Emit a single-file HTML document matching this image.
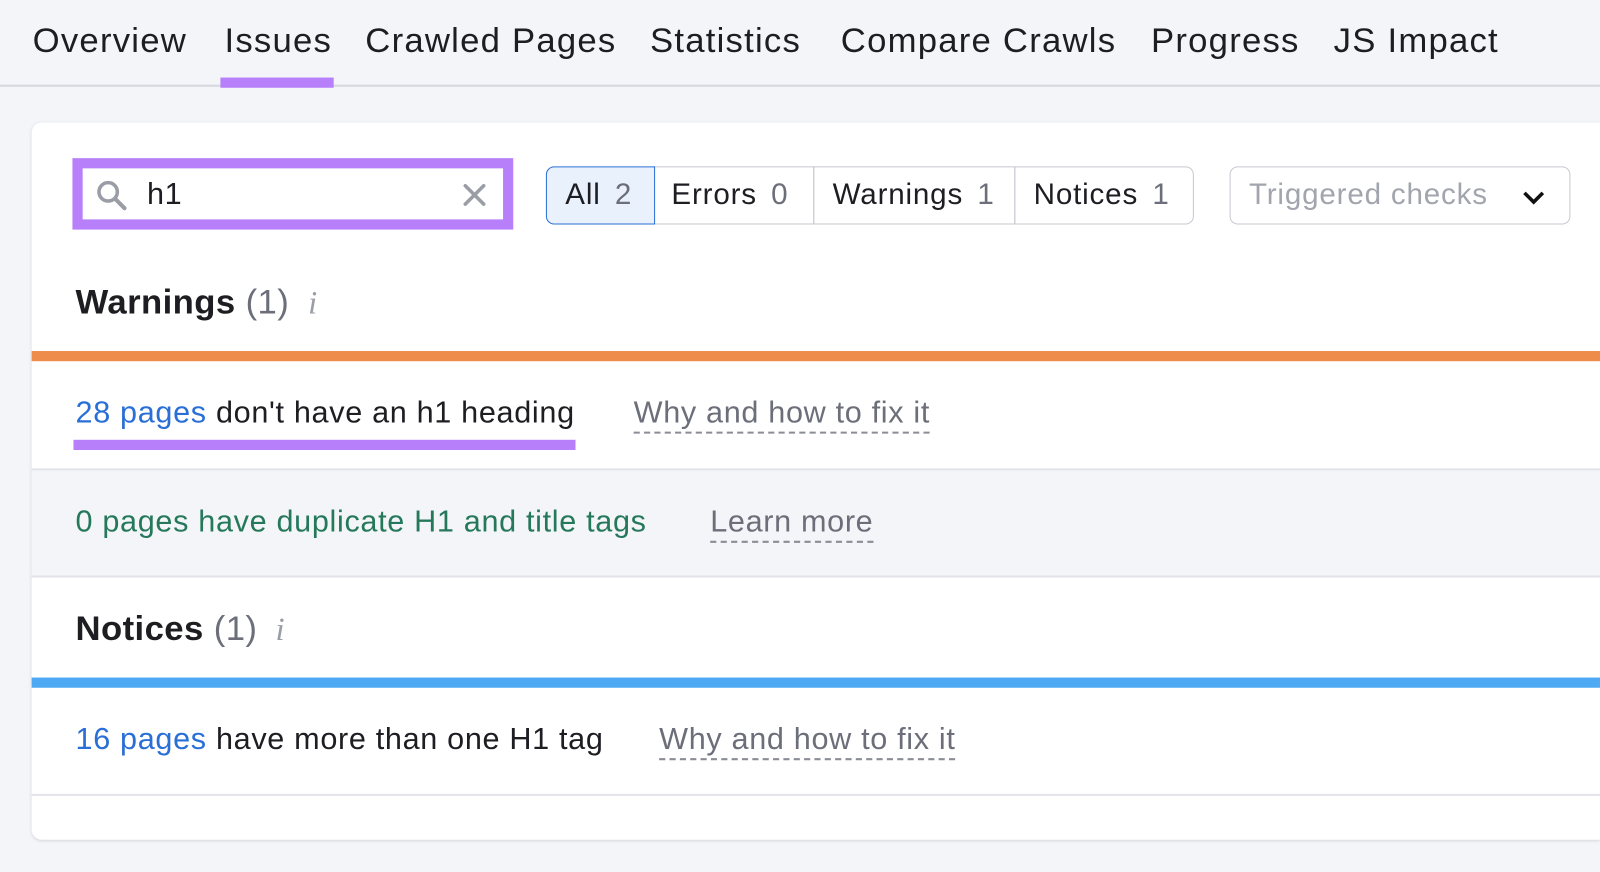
<!DOCTYPE html>
<html><head><meta charset="utf-8"><style>
*{margin:0;padding:0;box-sizing:border-box}
body{width:1600px;height:872px;background:#f4f5f9;font-family:"Liberation Sans",Arial,sans-serif;overflow:hidden;color:#1d1d22}
#w{position:absolute;left:0;top:0;width:1568px;height:855px;transform:scale(1.0204);transform-origin:0 0}
.a{position:absolute;white-space:nowrap}
.tab{top:20px;font-size:34px;line-height:40px;color:#1d1d22;letter-spacing:1.2px}
.card{position:absolute;left:31px;top:120px;width:1537px;height:703px;background:#fff;border-radius:10px 0 0 10px;box-shadow:0 1px 3px rgba(0,0,0,.12)}
.t30{font-size:30px;line-height:36px;letter-spacing:0.65px}
.dash{color:#6c6e79;border-bottom:2px dashed #8a8c96;padding-bottom:2px}
.seg{position:absolute;top:163px;height:57px;border:1.5px solid #c7c9d1;font-size:29px;line-height:54px;padding-left:18px;letter-spacing:0.8px}
.n{color:#6c6e79;margin-left:14px}
.h{font-size:34px;line-height:40px;font-weight:bold;letter-spacing:0.4px}
</style></head><body><div id="w">
<div class="a tab" style="left:32px">Overview</div>
<div class="a tab" style="left:220px">Issues</div>
<div class="a tab" style="left:358px">Crawled Pages</div>
<div class="a tab" style="left:637px">Statistics</div>
<div class="a tab" style="left:824px">Compare Crawls</div>
<div class="a tab" style="left:1128px">Progress</div>
<div class="a tab" style="left:1307px">JS Impact</div>
<div class="a" style="left:0;top:83px;width:1600px;height:2px;background:#d6d8de"></div>
<div class="a" style="left:216px;top:76px;width:111px;height:10px;background:#b77ffa"></div>

<div class="card"></div>
<div class="a" style="left:71px;top:155px;width:432px;height:70px;background:#b77ffa"></div>
<div class="a" style="left:81px;top:165px;width:412px;height:50px;background:#fff"></div>
<svg class="a" style="left:93px;top:175px" width="34" height="34" viewBox="0 0 34 34"><circle cx="13" cy="13" r="9" fill="none" stroke="#9a9ca6" stroke-width="3.5"/><path d="M20 20l9 9" stroke="#9a9ca6" stroke-width="4" stroke-linecap="round"/></svg>
<div class="a t30" style="left:144px;top:173px;color:#1d1d22">h1</div>
<svg class="a" style="left:453px;top:179px" width="24" height="24"><path d="M3 3l18 18M21 3L3 21" stroke="#9a9ca6" stroke-width="3.5" stroke-linecap="round"/></svg>
<div class="seg" style="left:535px;width:107px;border-radius:8px 0 0 8px;background:#e9f1fd;border-color:#2a6fd6;z-index:2">All<span class="n">2</span></div>
<div class="seg" style="left:640px;width:158px;border-left:none">Errors<span class="n">0</span></div>
<div class="seg" style="left:797px;width:198px;">Warnings<span class="n">1</span></div>
<div class="seg" style="left:994px;width:176px;border-radius:0 8px 8px 0">Notices<span class="n">1</span></div>
<div class="seg" style="left:1205px;width:334px;border-radius:8px;color:#a3a5ae">Triggered checks</div>
<svg class="a" style="left:1491px;top:185px" width="24" height="16"><path d="M3 4l9 9 9-9" fill="none" stroke="#111" stroke-width="3.5"/></svg>

<div class="a h" style="left:74px;top:276px">Warnings <span style="font-weight:normal;color:#6c6e79">(1)</span></div>
<div class="a" style="left:302px;top:278px;font-size:32px;font-style:italic;font-family:'Liberation Serif',serif;color:#9a9ca6">i</div>
<div class="a" style="left:31px;top:344px;width:1537px;height:10px;background:#ee8c4c"></div>
<div class="a t30" style="left:74px;top:387px"><span style="color:#2a6fd6">28 pages</span> don't have an h1 heading</div>
<div class="a" style="left:72px;top:431px;width:492px;height:10px;background:#b77ffa"></div>
<div class="a t30" style="left:621px;top:387px"><span class="dash">Why and how to fix it</span></div>
<div class="a" style="left:31px;top:459px;width:1537px;height:107px;background:#f4f5f9;border-top:2px solid #e2e4ea;border-bottom:2px solid #e2e4ea"></div>
<div class="a t30" style="left:74px;top:494px;color:#25795a">0 pages have duplicate H1 and title tags</div>
<div class="a t30" style="left:696px;top:494px"><span class="dash">Learn more</span></div>

<div class="a h" style="left:74px;top:596px">Notices <span style="font-weight:normal;color:#6c6e79">(1)</span></div>
<div class="a" style="left:270px;top:598px;font-size:32px;font-style:italic;font-family:'Liberation Serif',serif;color:#9a9ca6">i</div>
<div class="a" style="left:31px;top:664px;width:1537px;height:10px;background:#4ea9f5"></div>
<div class="a t30" style="left:74px;top:707px"><span style="color:#2a6fd6">16 pages</span> have more than one H1 tag</div>
<div class="a t30" style="left:646px;top:707px"><span class="dash">Why and how to fix it</span></div>
<div class="a" style="left:31px;top:778px;width:1537px;height:2px;background:#e2e4ea"></div>
</div></body></html>
